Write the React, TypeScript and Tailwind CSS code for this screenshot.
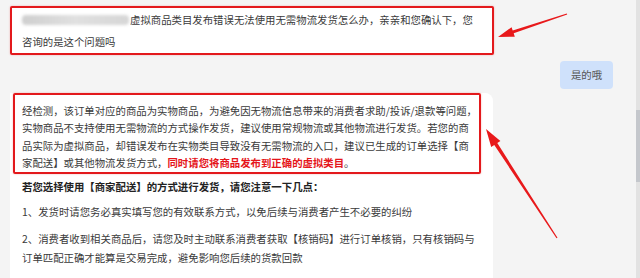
import React from 'react';

const font = { fontFamily: '"Noto Sans CJK SC", "Microsoft YaHei", sans-serif' };

function Arrows() {
  return (
    <svg className="pointer-events-none absolute left-0 top-0" width="640" height="278" viewBox="0 0 640 278">
      <polygon
        fill="#e8191b"
        points="498,37 511.6,27.2 512.7,30.5 566.8,13.5 567.2,14.5 513.7,33.3 514.8,36.7"
      />
      <polygon
        fill="#e8191b"
        points="486,129 500.4,141.1 497.3,143.1 557.5,237.7 556.5,238.3 494.3,145.1 491.2,147.1"
      />
    </svg>
  );
}

export default function App() {
  return (
    <div className="relative flex h-[278px] w-[640px] overflow-hidden whitespace-nowrap bg-[#f4f4f4] text-[10.4px] text-[#3a3a3a]" style={font}>
      <div className="flex w-[636px] flex-col pl-[10px]">
        <div className="mt-[6px] w-[484px] rounded-[2px] border-2 border-[#e3191c] bg-white pl-[10px] pt-[1px] leading-[22px] shadow-[0_0_2px_rgba(220,30,30,0.35)]">
          <div className="flex items-center">
            <span className="mr-[1px] inline-block h-[10px] w-[107px] rounded-sm bg-gradient-to-r from-[#cfcfcf] via-[#e0e0e0] to-[#d6d6d6] blur-[1.5px]" />
            <span>虚拟商品类目发布错误无法使用无需物流发货怎么办，亲亲和您确认下，您</span>
          </div>
          <div>咨询的是这个问题吗</div>
        </div>

        <div className="mt-[6px] flex justify-end pr-[23px]">
          <div className="flex h-[28px] w-[53px] items-center justify-center rounded-[4px] bg-[#cfe1fb] text-[#555]">
            是的哦
          </div>
        </div>

        <div className="mt-[4px] w-[483px] flex-1 rounded-tr-[8px] bg-white">
          <div className="ml-[3px] w-[468px] rounded-[2px] border-2 border-[#e3191c] pl-[7px] pt-[7px] leading-[17.4px] shadow-[0_0_2px_rgba(220,30,30,0.35)]">
            <div>经检测，该订单对应的商品为实物商品，为避免因无物流信息带来的消费者求助/投诉/退款等问题，</div>
            <div>实物商品不支持使用无需物流的方式操作发货，建议使用常规物流或其他物流进行发货。若您的商</div>
            <div>品实际为虚拟商品，却错误发布在实物类目导致没有无需物流的入口，建议已生成的订单选择【商</div>
            <div>
              家配送】或其他物流发货方式，
              <span className="font-bold text-[#e5151a]">同时请您将商品发布到正确的虚拟类目</span>。
            </div>
          </div>
          <div className="pl-[12px] leading-[19px]">
            <div className="mt-[3px] font-bold text-[#222]">若您选择使用【商家配送】的方式进行发货，请您注意一下几点：</div>
            <div className="mt-[6px]">1、发货时请您务必真实填写您的有效联系方式，以免后续与消费者产生不必要的纠纷</div>
            <div className="mt-[8px]">2、消费者收到相关商品后，请您及时主动联系消费者获取【核销码】进行订单核销，只有核销码与</div>
            <div>订单匹配正确才能算是交易完成，避免影响您后续的货款回款</div>
          </div>
        </div>
      </div>

      <div className="flex w-[4px] flex-col bg-[#e2e2e2]">
        <div className="mt-[110px] h-[72px] w-full bg-[#c4c7cc]" />
      </div>

      <Arrows />
    </div>
  );
}
